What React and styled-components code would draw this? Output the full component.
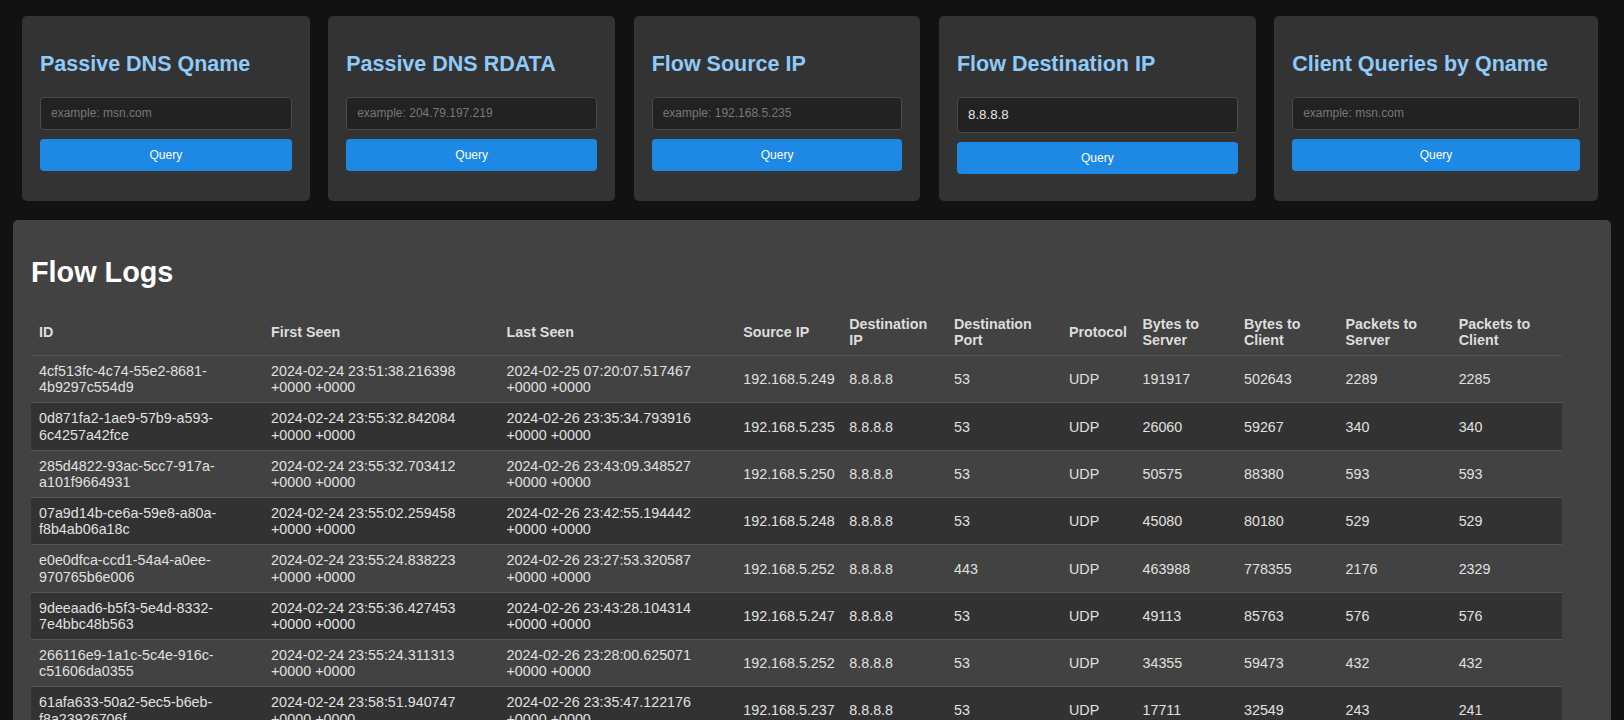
import React from 'react';
import styled, { createGlobalStyle } from 'styled-components';

const GlobalStyle = createGlobalStyle`
html, body {
  margin: 0;
  padding: 0;
  background-color: #121212;
  font-family: "Liberation Sans", Arial, sans-serif;
  color: #e0e0e0;
}
`;

const searches = [
  { title: 'Passive DNS Qname', placeholder: 'example: msn.com', width: 287.7 },
  { title: 'Passive DNS RDATA', placeholder: 'example: 204.79.197.219', width: 287 },
  { title: 'Flow Source IP', placeholder: 'example: 192.168.5.235', width: 286.8 },
  { title: 'Flow Destination IP', placeholder: 'example: 8.8.8.8', width: 316.7, value: '8.8.8.8' },
  { title: 'Client Queries by Qname', placeholder: 'example: msn.com', width: 323.7 },
];

const columns = [
  { label: 'ID', width: 232 },
  { label: 'First Seen', width: 235.5 },
  { label: 'Last Seen', width: 236.8 },
  { label: 'Source IP', width: 106 },
  { label: 'Destination IP', width: 104.7 },
  { label: 'Destination Port', width: 115 },
  { label: 'Protocol', width: 73.5 },
  { label: 'Bytes to Server', width: 101.5 },
  { label: 'Bytes to Client', width: 101.6 },
  { label: 'Packets to Server', width: 113.1 },
  { label: 'Packets to Client', width: 111.3 },
];

const flows = [
  ['4cf513fc-4c74-55e2-8681-4b9297c554d9', '2024-02-24 23:51:38.216398 +0000 +0000', '2024-02-25 07:20:07.517467 +0000 +0000', '192.168.5.249', '8.8.8.8', '53', 'UDP', '191917', '502643', '2289', '2285'],
  ['0d871fa2-1ae9-57b9-a593-6c4257a42fce', '2024-02-24 23:55:32.842084 +0000 +0000', '2024-02-26 23:35:34.793916 +0000 +0000', '192.168.5.235', '8.8.8.8', '53', 'UDP', '26060', '59267', '340', '340'],
  ['285d4822-93ac-5cc7-917a-a101f9664931', '2024-02-24 23:55:32.703412 +0000 +0000', '2024-02-26 23:43:09.348527 +0000 +0000', '192.168.5.250', '8.8.8.8', '53', 'UDP', '50575', '88380', '593', '593'],
  ['07a9d14b-ce6a-59e8-a80a-f8b4ab06a18c', '2024-02-24 23:55:02.259458 +0000 +0000', '2024-02-26 23:42:55.194442 +0000 +0000', '192.168.5.248', '8.8.8.8', '53', 'UDP', '45080', '80180', '529', '529'],
  ['e0e0dfca-ccd1-54a4-a0ee-970765b6e006', '2024-02-24 23:55:24.838223 +0000 +0000', '2024-02-26 23:27:53.320587 +0000 +0000', '192.168.5.252', '8.8.8.8', '443', 'UDP', '463988', '778355', '2176', '2329'],
  ['9deeaad6-b5f3-5e4d-8332-7e4bbc48b563', '2024-02-24 23:55:36.427453 +0000 +0000', '2024-02-26 23:43:28.104314 +0000 +0000', '192.168.5.247', '8.8.8.8', '53', 'UDP', '49113', '85763', '576', '576'],
  ['266116e9-1a1c-5c4e-916c-c51606da0355', '2024-02-24 23:55:24.311313 +0000 +0000', '2024-02-26 23:28:00.625071 +0000 +0000', '192.168.5.252', '8.8.8.8', '53', 'UDP', '34355', '59473', '432', '432'],
  ['61afa633-50a2-5ec5-b6eb-f8a23926706f', '2024-02-24 23:58:51.940747 +0000 +0000', '2024-02-26 23:35:47.122176 +0000 +0000', '192.168.5.237', '8.8.8.8', '53', 'UDP', '17711', '32549', '243', '241'],
];

function App() {
  return (
    <Page>
      <GlobalStyle />
      <SearchRow>
        {searches.map((s) => (
          <SearchCard key={s.title} $width={s.width}>
            <CardTitle>{s.title}</CardTitle>
            <SearchInput
              placeholder={s.placeholder}
              defaultValue={s.value}
              $filled={!!s.value}
            />
            <QueryButton>Query</QueryButton>
          </SearchCard>
        ))}
      </SearchRow>
      <LogPanel>
        <PanelTitle>Flow Logs</PanelTitle>
        <LogTable>
          <colgroup>
            {columns.map((c) => (
              <Col key={c.label} $width={c.width} />
            ))}
          </colgroup>
          <thead>
            <tr>
              {columns.map((c) => (
                <HeadCell key={c.label}>{c.label}</HeadCell>
              ))}
            </tr>
          </thead>
          <tbody>
            {flows.map((row) => (
              <BodyRow key={row[0]}>
                {row.map((v, i) => (
                  <Cell key={i}>{v}</Cell>
                ))}
              </BodyRow>
            ))}
          </tbody>
        </LogTable>
      </LogPanel>
    </Page>
  );
}

const Page = styled.div`
height: 100vh;
overflow: hidden;
`;

const SearchRow = styled.div`
display: flex;
gap: 18.5px;
padding: 16px 0 0 22px;
`;

const SearchCard = styled.div`
box-sizing: border-box;
width: ${(p) => p.$width}px;
flex-shrink: 0;
background-color: #333333;
border-radius: 5px;
padding: 16px 18px 27px;
`;

const CardTitle = styled.h2`
margin: 20px 0;
font-size: 21.5px;
font-weight: 700;
color: #90caf9;
white-space: nowrap;
`;

const SearchInput = styled.input`
display: block;
box-sizing: border-box;
width: 100%;
height: ${(p) => (p.$filled ? '35.6px' : '32.7px')};
margin: 0 0 9.7px;
padding: 0 10px;
background-color: #222222;
border: 1px solid #4a4a4a;
border-radius: 4px;
color: #e8e8e8;
font-family: "Liberation Sans", Arial, sans-serif;
font-size: ${(p) => (p.$filled ? '13.33px' : '12px')};
outline: none;
&::placeholder {
  color: #777777;
}
`;

const QueryButton = styled.button`
display: block;
box-sizing: border-box;
width: 100%;
height: 31.7px;
background-color: #1e88e5;
color: #ffffff;
border: none;
border-radius: 4px;
font-family: "Liberation Sans", Arial, sans-serif;
font-size: 12px;
cursor: pointer;
`;

const LogPanel = styled.div`
margin: 19.3px 13px 0 12.5px;
padding: 20px 49px 20px 18.5px;
background-color: #424242;
border-radius: 5px;
`;

const PanelTitle = styled.h2`
margin: 16px 0 19.6px;
font-size: 28.8px;
font-weight: 700;
color: #ffffff;
`;

const LogTable = styled.table`
width: 100%;
table-layout: fixed;
border-collapse: collapse;
font-size: 14.3px;
line-height: 16.15px;
`;

const Col = styled.col`
width: ${(p) => p.$width}px;
`;

const HeadCell = styled.th`
padding: 7px 8px;
text-align: left;
font-weight: 700;
color: #dddddd;
border-bottom: 1px solid #555555;
`;

const BodyRow = styled.tr`
&:nth-child(even) {
  background-color: #323232;
}
`;

const Cell = styled.td`
padding: 7px 8px;
color: #e0e0e0;
border-bottom: 1px solid #555555;
`;

export default App;
